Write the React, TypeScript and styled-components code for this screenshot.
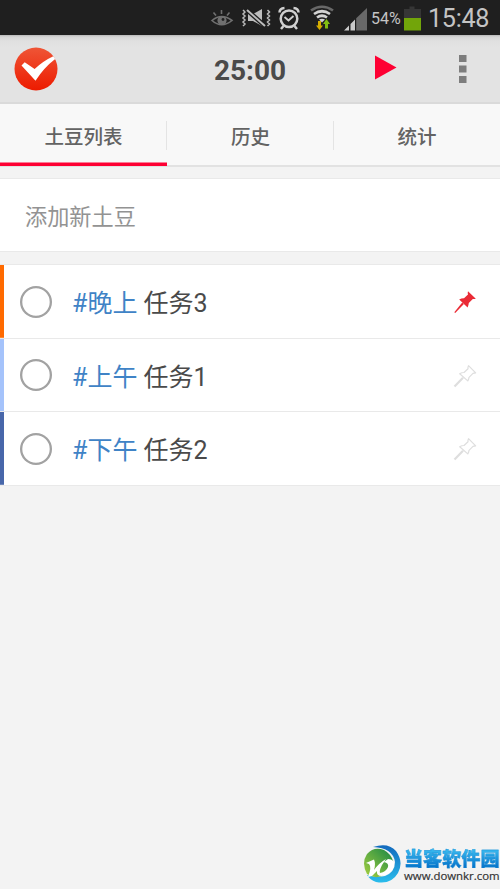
import React from "react";
import styled, { createGlobalStyle } from "styled-components";

const GlobalStyle = createGlobalStyle`
  * { box-sizing: border-box; }
  body { margin: 0; background: #f3f3f3; font-family: Roboto, "Noto Sans CJK SC", sans-serif; }
`;

const Screen = styled.div`
  position: relative;
  display: flex;
  flex-direction: column;
  width: 500px;
  height: 889px;
  overflow: hidden;
  background: #f3f3f3;
`;

const StatusBar = styled.header`
  display: flex;
  align-items: center;
  height: 35px;
  flex: none;
  padding-left: 210px;
  background: #1f1f1f;
  color: #c4c4c4;
  svg { flex: none; display: block; }
`;

const BatteryText = styled.span`
  width: 33px;
  margin-left: 3px;
  font-size: 16px;
  line-height: 35px;
  padding-top: 2px;
`;

const Clock = styled.span`
  margin-left: 7px;
  font-size: 25.2px;
  line-height: 35px;
  padding-top: 1px;
  letter-spacing: -0.3px;
`;

const AppBar = styled.div`
  display: grid;
  grid-template-columns: 60px 1fr 60px;
  align-items: center;
  height: 69px;
  flex: none;
  background: linear-gradient(#b8b8b8 0, #d6d6d6 2px, #e0e0e0 6px, #e3e3e3 12px);
  border-bottom: 2px solid #dadada;
`;

const Logo = styled.svg`
  display: block;
  margin: 1px 0 0 14px;
`;

const Timer = styled.div`
  text-align: center;
  font-size: 28px;
  font-weight: 700;
  line-height: 36px;
  color: #4a4a4a;
  padding-top: 4px;
`;

const TimerRow = styled.div`
  display: grid;
  grid-template-columns: 1fr 80px 1fr;
  align-items: center;
`;

const PlayIcon = styled.svg`
  display: block;
  margin-left: 85px;
  margin-bottom: 2px;
`;

const MoreIcon = styled.svg`
  display: block;
  margin-left: 18px;
  margin-top: 1px;
`;

const Tabs = styled.nav`
  display: grid;
  grid-template-columns: 167px 167px 166px;
  height: 63px;
  flex: none;
  background: #f8f8f8;
  box-shadow: inset 0 -2px #e2e2e2;
`;

const Tab = styled.div<{ $active?: boolean; $divided?: boolean }>`
  display: flex;
  align-items: center;
  justify-content: center;
  margin-bottom: 1px;
  padding-top: ${(p) => (p.$active ? 3 : 0)}px;
  box-shadow: ${(p) => (p.$active ? "inset 0 -3.5px #fe0033" : "none")};
  padding-bottom: ${(p) => (p.$active ? 3 : 0)}px;
  background: ${(p) =>
    p.$divided ? "linear-gradient(#e4e4e4, #e4e4e4) right 17px / 1px 29px no-repeat" : "none"};
  color: #636363;
  font-size: 19.5px;
  font-weight: 500;
`;

const AddField = styled.div`
  display: flex;
  align-items: center;
  height: 74px;
  flex: none;
  margin-top: 11px;
  padding-left: 25px;
  background: #fff;
  border-top: 1px solid #e9e9e9;
  border-bottom: 1px solid #e9e9e9;
  color: #939393;
  font-size: 22.2px;
`;

const TaskList = styled.ul`
  list-style: none;
  margin: 12px 0 0;
  padding: 0;
  border-top: 1px solid #e9e9e9;
`;

const TaskRow = styled.li<{ $color: string }>`
  display: flex;
  align-items: center;
  height: 73.6px;
  padding: 0 23px 0 20px;
  border-bottom: 1.4px solid #e9e9e9;
  background: linear-gradient(${(p) => p.$color}, ${(p) => p.$color}) left / 4px 100% no-repeat #fff;
  > svg { margin-top: 2px; }
`;

const Check = styled.span`
  width: 32px;
  height: 32px;
  margin-top: 1px;
  box-shadow: inset 0 0 0 2.3px #a2a2a2;
  border-radius: 50%;
`;

const TaskTitle = styled.span`
  flex: 1;
  margin-left: 20px;
  padding-top: 6px;
  color: #4a4a4a;
  font-size: 25px;
  line-height: 36px;
  white-space: pre;
`;

const Tag = styled.span`
  color: #3f83c6;
`;

const Watermark = styled.div`
  position: absolute;
  left: 364px;
  bottom: 0;
  display: flex;
  height: 44px;
  white-space: nowrap;
`;

const BrandText = styled.div`
  display: flex;
  flex-direction: column;
  margin-left: 3px;
  padding-top: 1px;
`;

const BrandName = styled.span`
  font: 900 19.1px/24px "Noto Sans CJK SC", sans-serif;
  background: linear-gradient(#36b6ed 20%, #0876cb 85%);
  background-clip: text;
  -webkit-background-clip: text;
  color: transparent;
  -webkit-text-stroke: 0.3px #168fd8;
`;

const BrandUrl = styled.span`
  font: 11.4px/12px "Open Sans", sans-serif;
  color: #333;
  -webkit-text-stroke: 0.2px #333;
`;

const StatusIcons = () => (
  <svg width="158" height="35" viewBox="210 0 158 35">
    <g fill="none" stroke="#707070" strokeWidth="1.6">
      <path d="M212 20.500Q221.500 12.500 232 20.500Q221.500 29 212 20.500Z" />
      <circle cx="222" cy="20.500" r="3.800" fill="#707070" />
      <path d="M221.500 10v4M213.500 12.500l2.500 3M229.500 12.500l-2.500 3" />
    </g>
    <circle cx="223" cy="19.500" r="1.400" fill="#222" />
    <g fill="none" stroke="#bababa" strokeWidth="1.500">
      <path d="M243 10l2 2-2 2 2 2-2 2 2 2-2 2 2 2-2 2M267.500 10l2 2-2 2 2 2-2 2 2 2-2 2 2 2-2 2" />
    </g>
    <path d="M248 14h5l9-5v17l-9-5h-5z" fill="#bdbdbd" />
    <path d="M247 10l18 16" stroke="#1f1f1f" strokeWidth="4.500" />
    <path d="M247 10l18 16" stroke="#bdbdbd" strokeWidth="2" />
    <g fill="none" stroke="#d0d0d0" strokeWidth="2.500">
      <circle cx="289" cy="18.800" r="8.300" />
      <path d="M284.500 17l4 3.500 5-4.500" strokeWidth="1.900" />
      <path d="M279.500 12.500q0-4 5-4.500M298.500 12.500q0-4-5-4.500M283.500 26l-2.500 3M294.500 26l2.500 3" />
    </g>
    <g fill="none" strokeWidth="2.700">
      <path d="M311 10.500q11-7.500 22 0" stroke="#686868" />
      <path d="M314 14q8-5.500 16 0M317 17.500q5-3.500 10 0" stroke="#d2d2d2" />
    </g>
    <path d="M319 19.500q3-1.500 6 0l-3 3z" fill="#d2d2d2" />
    <path d="M318 21h3v4.500h2l-3.500 4.500-3.500-4.500h2z" fill="#d6ad00" />
    <path d="M325 28.500h3V24h2l-3.500-5-3.500 5h2z" fill="#82bd12" />
    <path d="M344 30.500l5-5v5zM350.500 24l4.500-4.500v11h-4.500z" fill="#cacaca" />
    <path d="M356.200 18.300l10.800-10.300v22.500h-10.800z" fill="#686868" />
  </svg>
);

const Battery = () => (
  <svg width="17" height="35" viewBox="404 0 17 35">
    <path d="M404 9h5.500V6.500h5V9h6.500v9h-17z" fill="#363636" />
    <path d="M404 18h17v12.500h-17z" fill="#72a50a" />
  </svg>
);

const Pin = ({ active }: { active?: boolean }) => (
  <svg width="24" height="24" viewBox="0 0 24 24">
    {active ? (
      <g fill="#ea2b36">
        <path d="M15 1.200l7.800 7.500q-1.500.4-3 .2l-4 4q-.2 2.200-1.200 4.500L6.200 9.500q2.400-1.300 4.800-1.200l4-3.800q-.6-1.600 0-3.300z" />
        <path d="M9.200 12.500l1.700 1.500-8.700 9-.9-.7z" />
      </g>
    ) : (
      <g fill="none" stroke="#dedede">
        <path d="M15.500 1.700l7.200 7.200q-1.500.2-2.700.5l-4 4q-.2 1.800-1.200 3.500L6.700 9.700q2-1.200 4.300-1.200l4-3.800q-.3-1.400.5-3z" strokeWidth="1.200" strokeLinejoin="round" />
        <path d="M10 13.800l-8.500 8.800" strokeWidth="2.200" />
      </g>
    )}
  </svg>
);

const BrandMark = () => (
  <svg width="37" height="40" viewBox="0 0 37 40">
    <defs>
      <linearGradient id="ring" x2="0" y2="1">
        <stop stopColor="#1269bd" />
        <stop offset="1" stopColor="#2bbdec" />
      </linearGradient>
      <linearGradient id="leaf" x1="1" x2="0" y2="1">
        <stop stopColor="#178644" />
        <stop offset="1" stopColor="#a8d13f" />
      </linearGradient>
    </defs>
    <path d="M9 2Q24-3 32 6Q40 17 34 28Q27 40 12 37Q6 35 3 30Q13 33 21 31Q31 27 31 17Q29 3 9 2Z" fill="url(#ring)" />
    <path d="M3 29Q-3 18 3 9Q10 1 20 5Q27 9 29 16Q27 25 18 31Q10 34 3 29Z" fill="url(#leaf)" />
    <path d="M2 18L10 14.500Q12 19 10 25Q15 18 22 14L18 20Q15 26 16 28Q22 27 24 22Q25 18 20 17L24 14Q31 14 30 21Q28 29 18 31Q12 31 13 26L8 31L4 32Q8 22 5 19Z" fill="#fff" />
  </svg>
);

const tasks = [
  { tag: "#晚上", title: "任务3", color: "#ff6a00", pinned: true },
  { tag: "#上午", title: "任务1", color: "#a5c3fb", pinned: false },
  { tag: "#下午", title: "任务2", color: "#4867aa", pinned: false },
];

export default function App() {
  return (
    <>
      <GlobalStyle />
      <Screen>
        <StatusBar>
          <StatusIcons />
          <BatteryText>54%</BatteryText>
          <Battery />
          <Clock>15:48</Clock>
        </StatusBar>
        <AppBar>
          <Logo width="44" height="44" viewBox="0 0 44 44">
            <defs>
              <linearGradient id="logoRed" x2="0" y2="1">
                <stop stopColor="#ef5536" />
                <stop offset="1" stopColor="#ed1b00" />
              </linearGradient>
            </defs>
            <circle cx="22" cy="22" r="21.500" fill="url(#logoRed)" />
            <path d="M7.500 18.500l3.200-3.300 9.900 6.800Q29 14 39.300 9.200l1.900 2.800Q30 20.500 21.500 33.700z" fill="#fff" />
          </Logo>
          <TimerRow>
            <span />
            <Timer>25:00</Timer>
            <PlayIcon width="22" height="25" viewBox="0 0 22 25">
              <path d="M0 .5l21.500 12L0 24.500z" fill="#fe0033" />
            </PlayIcon>
          </TimerRow>
          <MoreIcon width="9" height="30" viewBox="0 0 9 30">
            <path d="M1 1h7.500v7H1zM1 11.500h7.500v7H1zM1 22h7.500v7H1z" fill="#7d7d7d" />
          </MoreIcon>
        </AppBar>
        <Tabs>
          <Tab $active $divided>土豆列表</Tab>
          <Tab $divided>历史</Tab>
          <Tab>统计</Tab>
        </Tabs>
        <AddField>添加新土豆</AddField>
        <TaskList>
          {tasks.map((t) => (
            <TaskRow key={t.tag} $color={t.color}>
              <Check />
              <TaskTitle>
                <Tag>{t.tag}</Tag> {t.title}
              </TaskTitle>
              <Pin active={t.pinned} />
            </TaskRow>
          ))}
        </TaskList>
        <Watermark>
          <BrandMark />
          <BrandText>
            <BrandName>当客软件园</BrandName>
            <BrandUrl>www.downkr.com</BrandUrl>
          </BrandText>
        </Watermark>
      </Screen>
    </>
  );
}
